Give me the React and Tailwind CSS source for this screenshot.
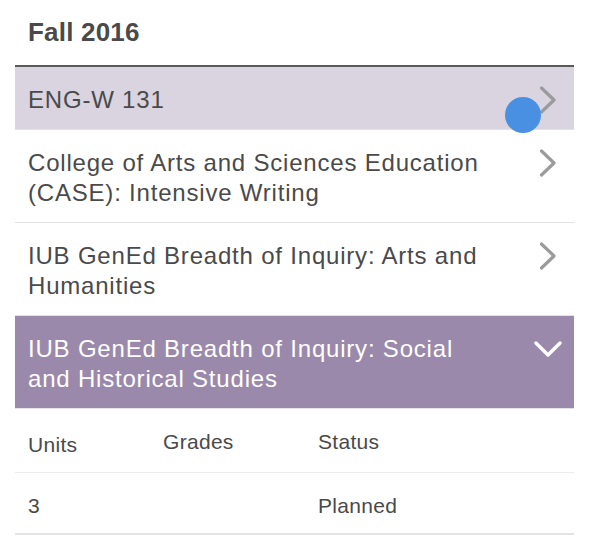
import React from "react";

function ChevronRight() {
  return (
    <svg width="20" height="28" viewBox="0 0 20 28" fill="none" className="shrink-0">
      <path d="M3.5 2 L16 14 L3.5 26" stroke="#9b9b9b" strokeWidth="3.2" strokeLinecap="round" strokeLinejoin="round" />
    </svg>
  );
}

function ChevronDown() {
  return (
    <svg width="28" height="18" viewBox="0 0 28 18" fill="none" className="shrink-0">
      <path d="M2 3 L14 15 L26 3" stroke="#ffffff" strokeWidth="3.4" strokeLinecap="round" strokeLinejoin="round" />
    </svg>
  );
}

function Row({ children, active, open }) {
  return (
    <div
      className={
        "flex items-start justify-between gap-4 pl-[13px] pt-[18px] pb-[14px] border-b border-[#e3e3e3] " +
        (open
          ? "bg-[#9a89aa] text-white pr-[12px]"
          : active
          ? "bg-[#d9d4e0] text-[#4a4a4a] pr-[16px]"
          : "bg-white text-[#4a4a4a] pr-[16px]")
      }
    >
      <div className="text-[24px] leading-[30px] tracking-[0.8px]">{children}</div>
      <div className="h-[30px] flex items-center">{open ? <ChevronDown /> : <ChevronRight />}</div>
    </div>
  );
}

export default function App() {
  return (
    <div
      className="w-[594px] h-[551px] bg-white pl-[15px] pr-[20px] relative overflow-hidden"
      style={{ fontFamily: '"Liberation Sans", Arial, sans-serif' }}
    >
      <div className="h-[65px] flex items-center pl-[13px]">
        <h1 className="text-[26px] font-bold text-[#4a4a4a] tracking-[0.2px]">Fall 2016</h1>
      </div>
      <div className="border-t-2 border-[#5a5a5a]">
        <Row active>ENG-W 131</Row>
        <Row>
          College of Arts and Sciences Education
          <br />
          (CASE): Intensive Writing
        </Row>
        <Row>
          IUB GenEd Breadth of Inquiry: Arts and
          <br />
          Humanities
        </Row>
        <Row open>
          IUB GenEd Breadth of Inquiry: Social
          <br />
          and Historical Studies
        </Row>
        <div className="grid grid-cols-[135px_155px_1fr] items-center h-[64px] pl-[13px] border-b border-[#ececec] text-[21px] text-[#4a4a4a] tracking-[0.3px]">
          <div className="pt-[8px]">Units</div>
          <div className="pt-[3px]">Grades</div>
          <div className="pt-[3px]">Status</div>
        </div>
        <div className="grid grid-cols-[135px_155px_1fr] items-center h-[62px] pl-[13px] border-b-2 border-[#e3e3e3] text-[21px] text-[#4a4a4a] tracking-[0.3px]">
          <div className="pt-[5px]">3</div>
          <div></div>
          <div className="pt-[5px]">Planned</div>
        </div>
      </div>
      <div className="absolute left-[505px] top-[97px] w-[36px] h-[36px] rounded-full bg-[#4a90e2]" />
    </div>
  );
}
